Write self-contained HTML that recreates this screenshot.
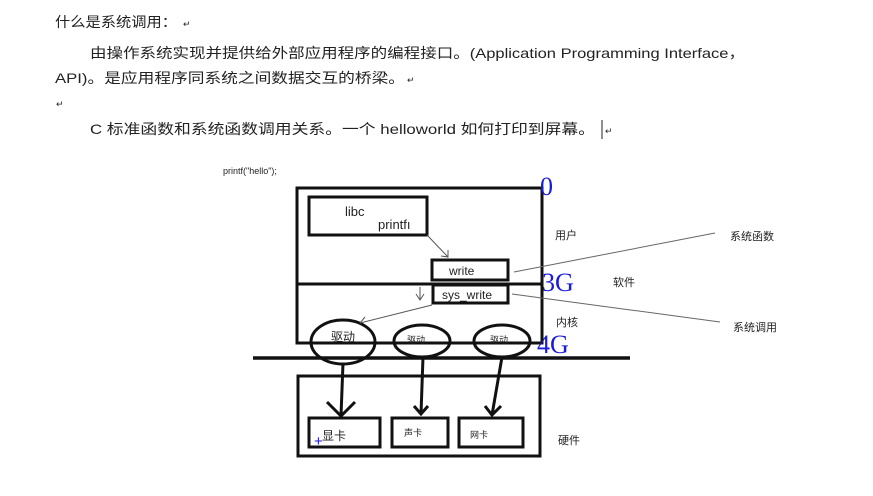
<!DOCTYPE html>
<html><head><meta charset="utf-8"><style>
html,body{margin:0;padding:0;background:#fff;width:873px;height:496px;overflow:hidden}
svg{display:block}
text{font-family:"Liberation Sans","Noto Sans CJK SC",sans-serif;fill:#222}
.g{font-family:"Liberation Serif",serif;fill:#1a1adc;font-size:26px}
</style></head><body>
<svg width="873" height="496" viewBox="0 0 873 496" xmlns="http://www.w3.org/2000/svg">
<text x="55" y="27" font-size="14" textLength="122" lengthAdjust="spacingAndGlyphs">什么是系统调用：</text>
<text x="183" y="27" font-size="9" fill="#888">↵</text>
<text x="90" y="58" font-size="14" textLength="655" lengthAdjust="spacingAndGlyphs">由操作系统实现并提供给外部应用程序的编程接口。(Application Programming Interface，</text>
<text x="55" y="83" font-size="14" textLength="350" lengthAdjust="spacingAndGlyphs">API)。是应用程序同系统之间数据交互的桥梁。</text>
<text x="407" y="83" font-size="9" fill="#888">↵</text>
<text x="56" y="107" font-size="9" fill="#888">↵</text>
<text x="90" y="134" font-size="14" textLength="505" lengthAdjust="spacingAndGlyphs">C 标准函数和系统函数调用关系。一个 helloworld 如何打印到屏幕。</text>
<line x1="602" y1="120" x2="602" y2="139" stroke="#222" stroke-width="1"/>
<text x="605" y="134" font-size="9" fill="#888">↵</text>

<text x="223" y="174" font-size="9" fill="#333">printf("hello");</text>
<g fill="none" stroke="#111">
<rect x="297" y="188" width="245" height="155" stroke-width="3"/>
<rect x="309" y="197" width="118" height="38" stroke-width="3"/>
<rect x="432" y="260" width="76" height="20" stroke-width="3"/>
<line x1="298" y1="284" x2="542" y2="284" stroke-width="3"/>
<rect x="433" y="285" width="75" height="18" stroke-width="3"/>
<line x1="253" y1="358" x2="630" y2="358" stroke-width="3.5"/>
<rect x="298" y="376" width="242" height="80" stroke-width="3"/>
<rect x="309" y="418" width="71" height="29" stroke-width="3"/>
<rect x="392" y="418" width="56" height="29" stroke-width="3"/>
<rect x="459" y="418" width="64" height="29" stroke-width="3"/>
<ellipse cx="343" cy="342" rx="32" ry="22" stroke-width="3"/>
<ellipse cx="422" cy="341" rx="28" ry="16" stroke-width="3"/>
<ellipse cx="502" cy="341" rx="28" ry="16" stroke-width="3"/>
<path d="M427 235 L448 257 M441 256 L448 257 L448 250" stroke-width="1" stroke="#555"/>
<path d="M420 287 L420 300 M416 294 L420 300 L424 294" stroke-width="1" stroke="#555"/>
<path d="M432 305 L360 323 M365 317 L360 323" stroke-width="1" stroke="#555"/>
<path d="M514 272 L715 233" stroke-width="1" stroke="#666"/>
<path d="M512 294 L720 322" stroke-width="1" stroke="#666"/>
<path d="M343 363 L341 416 M327 402 L341 416 L355 402" stroke-width="3"/>
<path d="M423 357 L421 414 M414 406 L421 414 L428 406" stroke-width="3"/>
<path d="M502 357 L492 415 M485 406 L492 415 L501 406" stroke-width="3"/>
</g>
<text x="345" y="216" font-size="13">libc</text>
<text x="378" y="229" font-size="13">printfı</text>
<text x="449" y="275" font-size="12">write</text>
<text x="442" y="299" font-size="12">sys_write</text>
<text x="331" y="341" font-size="12" fill="#444">驱动</text>
<text x="407" y="343" font-size="9" fill="#444">驱动</text>
<text x="490" y="343" font-size="9" fill="#444">驱动</text>
<text x="322" y="440" font-size="12">显卡</text>
<text x="314" y="446" font-size="15" fill="#1a1adc" style="fill:#1a1adc">+</text>
<text x="404" y="436" font-size="9">声卡</text>
<text x="470" y="438" font-size="9">网卡</text>
<text class="g" x="540" y="195">0</text>
<text class="g" x="542" y="291">3G</text>
<text class="g" x="537" y="353">4G</text>
<text x="555" y="239" font-size="11">用户</text>
<text x="613" y="286" font-size="11">软件</text>
<text x="556" y="326" font-size="11">内核</text>
<text x="558" y="444" font-size="11">硬件</text>
<text x="730" y="240" font-size="11">系统函数</text>
<text x="733" y="331" font-size="11">系统调用</text>
</svg>
</body></html>
